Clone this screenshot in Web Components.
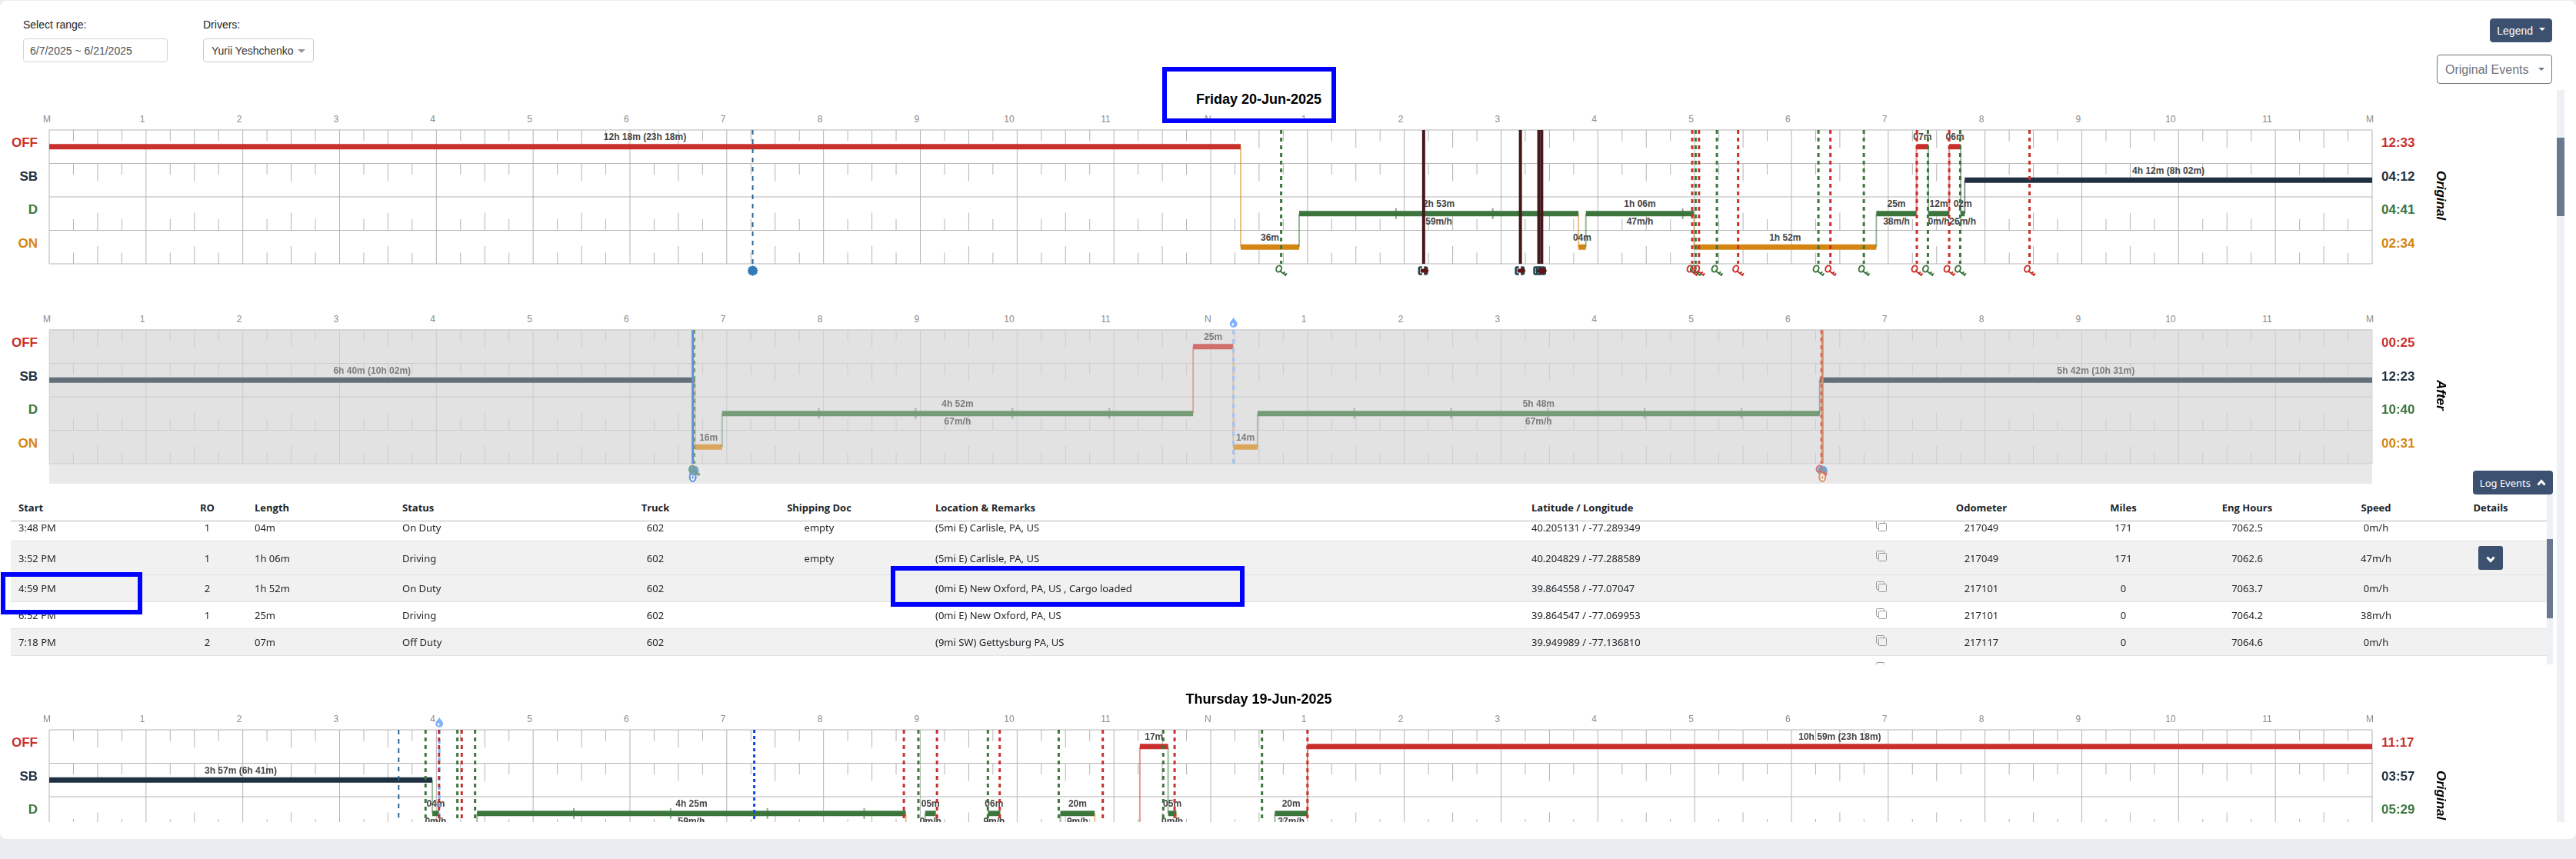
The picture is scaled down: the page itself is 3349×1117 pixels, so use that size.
<!DOCTYPE html>
<html lang="en">
<head>
<meta charset="utf-8">
<meta name="viewport" content="width=device-width, initial-scale=1">
<title>Driver logs</title>
<style>
    body {
        margin: 0;
        background: #ebecf1;
        color: #212529;
        font-family: "Liberation Sans", Arial, sans-serif;
        font-size: 14px;
        --off: #c9302c;
        --sb: #1f3042;
        --d: #3c763d;
        --on: #d58512;
        --primary: #3c5070;
    }
</style>
</head>
<body>
<log-page></log-page>

<script>
const CHARTS = {
    "fri-original": {
        side: "Original",
        totals: ["12:33", "04:12", "04:41", "02:34"],
        segments: [
            ["off", 0, 12.31, "12h 18m (23h 18m)"],
            ["on", 12.31, 12.914, "36m"],
            ["d", 12.914, 15.8, "2h 53m", "59m/h"],
            ["on", 15.8, 15.876, "04m"],
            ["d", 15.876, 16.993, "1h 06m", "47m/h"],
            ["on", 16.993, 18.877, "1h 52m"],
            ["d", 18.877, 19.292, "25m", "38m/h"],
            ["off", 19.292, 19.415, "07m"],
            ["d", 19.415, 19.63, "12m", "0m/h"],
            ["off", 19.63, 19.749, "06m"],
            ["d", 19.749, 19.79, "02m", "26m/h"],
            ["sb", 19.79, 24, "4h 12m (8h 02m)"]
        ],
        markers: [
            ["cert", 7.268], ["keyOn", 12.728],
            ["login", 14.2], ["login", 15.2], ["login", 15.39], ["login", 15.42],
            ["keyOff", 16.975], ["keyOn", 17.01], ["keyOff", 17.045],
            ["keyOn", 17.23], ["keyOff", 17.449], ["keyOn", 18.279], ["keyOff", 18.403],
            ["keyOn", 18.748], ["keyOff", 19.296], ["keyOn", 19.41],
            ["keyOff", 19.63], ["keyOn", 19.744], ["keyOff", 20.46]
        ]
    },
    "fri-after": {
        side: "After",
        shaded: true,
        totals: ["00:25", "12:23", "10:40", "00:31"],
        segments: [
            ["sb", 0, 6.672, "6h 40m (10h 02m)"],
            ["on", 6.672, 6.952, "16m"],
            ["d", 6.952, 11.818, "4h 52m", "67m/h"],
            ["off", 11.818, 12.233, "25m"],
            ["on", 12.233, 12.484, "14m"],
            ["d", 12.484, 18.292, "5h 48m", "67m/h"],
            ["sb", 18.292, 24, "5h 42m (10h 31m)"]
        ],
        markers: [
            ["pinBlue", 6.649], ["cert0", 6.66], ["keyOn", 6.664],
            ["drop", 12.236],
            ["cert0", 18.32], ["pinOrange", 18.32], ["keyOff", 18.31]
        ]
    },
    "thu-original": {
        side: "Original",
        totals: ["11:17", "03:57", "05:29", "03:17"],
        segments: [
            ["sb", 0, 3.958, "3h 57m (6h 41m)"],
            ["d", 3.958, 4.028, "04m", "0m/h"],
            ["on", 4.028, 4.42],
            ["d", 4.42, 8.85, "4h 25m", "59m/h"],
            ["on", 8.85, 9.05],
            ["d", 9.05, 9.16, "05m", "0m/h"],
            ["on", 9.16, 9.698],
            ["d", 9.698, 9.826, "06m", "9m/h"],
            ["on", 9.826, 10.447],
            ["d", 10.447, 10.802, "20m", "9m/h"],
            ["on", 10.802, 11.268],
            ["off", 11.268, 11.56, "17m"],
            ["d", 11.56, 11.646, "05m", "0m/h"],
            ["on", 11.646, 12.663],
            ["d", 12.663, 13, "20m", "37m/h"],
            ["off", 13, 24, "10h 59m (23h 18m)"]
        ],
        markers: [
            ["cert", 3.61], ["keyOn", 3.888], ["drop", 4.03], ["keyOff", 4.027],
            ["keyOn", 4.217], ["keyOff", 4.262], ["keyOn", 4.4], ["blue", 7.284],
            ["keyOff", 8.83], ["keyOn", 8.98], ["keyOff", 9.172],
            ["keyOn", 9.698], ["keyOff", 9.82], ["keyOn", 10.43], ["keyOff", 10.885],
            ["keyOn", 11.51], ["keyOff", 11.627], ["keyOn", 12.53], ["keyOff", 13]
        ]
    }
};

const EVENTS = [
    ["3:48 PM", "1", "04m", "On Duty", "602", "empty", "(5mi E) Carlisle, PA, US", "40.205131 / -77.289349", "217049", "171", "7062.5", "0m/h"],
    ["3:52 PM", "1", "1h 06m", "Driving", "602", "empty", "(5mi E) Carlisle, PA, US", "40.204829 / -77.288589", "217049", "171", "7062.6", "47m/h"],
    ["4:59 PM", "2", "1h 52m", "On Duty", "602", "", "(0mi E) New Oxford, PA, US , Cargo loaded", "39.864558 / -77.07047", "217101", "0", "7063.7", "0m/h"],
    ["6:52 PM", "1", "25m", "Driving", "602", "", "(0mi E) New Oxford, PA, US", "39.864547 / -77.069953", "217101", "0", "7064.2", "38m/h"],
    ["7:18 PM", "2", "07m", "Off Duty", "602", "", "(9mi SW) Gettysburg PA, US", "39.949989 / -77.136810", "217117", "0", "7064.6", "0m/h"],
    ["", "", "", "", "", "", "", "", "", "", "", ""]
];

// [title, relative width, alignment]
const COLUMNS = [
    ["Start", 204, "left"], ["RO", 103, "center"], ["Length", 192, "left"],
    ["Status", 267, "left"], ["Truck", 144, "center"], ["Shipping Doc", 282, "center"],
    ["Location & Remarks", 775, "left"], ["Latitude / Longitude", 428, "left"], ["", 74, "center"],
    ["Odometer", 186, "center"], ["Miles", 183, "center"], ["Eng Hours", 139, "center"],
    ["Speed", 196, "center"], ["Details", 124, "center"]
];

const ROWS = ["off", "sb", "d", "on"];
const TOP = 32;
const ROW_H = 43.5;
const GRID_H = 174;

const KEY = `<g fill="none" stroke="currentColor" stroke-width="2">
    <ellipse cx="-3" cy="-2.500" rx="3.300" ry="4.200" transform="rotate(25 -3 -2.500)"/>
    <path d="M-2 0L6.500 6.500M2.500 3.500L5 1.500M4.500 6L7.500 3.500"/></g>`;
const CERT = `<path fill="#337ab7" d="M0-7L1.600-5.600L3.500-6.100L4.200-4.200L6.100-3.500L5.600-1.600L7 0L5.600 1.600L6.100 3.500L4.200 4.200L3.500 6.100L1.600 5.600L0 7L-1.600 5.600L-3.500 6.100L-4.200 4.200L-6.100 3.500L-5.600 1.600L-7 0L-5.600-1.600L-6.100-3.500L-4.200-4.200L-3.500-6.100L-1.600-5.600Z"/>`;
const LOGIN = `<path fill="none" stroke="#1d4350" stroke-width="2.500" d="M-2-4.500h-2.500a1.500 1.500 0 0 0-1.500 2v5a1.500 1.500 0 0 0 1.500 2h2.500M1-4.500h1.500a2 2 0 0 1 2 2v5a2 2 0 0 1-2 2h-1.500"/>
    <path fill="#5c1616" d="M-4-2.500h4.500v-3L7 0L.5 5.500V2.500h-4.500z"/>`;
const PIN = `<ellipse cy="8" rx="4" ry="6" fill="#fff" stroke="currentColor" stroke-width="2"/>
    <path fill="none" stroke="currentColor" d="M0 6v5M-2 8.500h4"/>`;
const DROP = `<path fill="currentColor" fill-rule="evenodd" d="M0-6.500C1-3.500 5-1 5 2.200A5 4.500 0 0 1-5 2.200C-5-1-1-3.500 0-6.500ZM-1 1a1.200 1.800 0 1 0 .1 0Z"/>`;

// colour, line width, dash, icon, icon above the grid
const MARKERS = {
    keyOn: ["#3c763d", 3, "5 5", KEY],
    keyOff: ["#c9302c", 3, "5 5", KEY],
    cert: ["#2a6496", 2, "6 6", CERT],
    cert0: ["#337ab7", 0, "", CERT],
    login: ["#44191c", 4, "", LOGIN],
    pinBlue: ["#1565d8", 3, "", PIN],
    pinOrange: ["#d5651a", 3, "", PIN],
    drop: ["#82b1ff", 3, "6 6", DROP, true],
    blue: ["#0d4be8", 3, "4 4", ""]
};

const pct = h => (h / 24 * 100).toFixed(3) + "%";

class DutyChart extends HTMLElement {
    constructor() {
        super()
        this.root = this.attachShadow({ mode: "open" });
    }
    connectedCallback() {
        this.data = CHARTS[this.getAttribute("name")];
        this.root.innerHTML = `
        <style>
            :host {
                display: grid;
                grid-template-columns: 50px 1fr 175px;
                height: 232px;
            }
            .statuses, .totals {
                display: flex;
                flex-direction: column;
                height: 174px;
                padding-top: 32px;
                font-size: 17px;
                font-weight: bold;
                line-height: 34px;
            }
            .statuses { text-align: right; padding-right: 15px; }
            .totals { width: 44px; }
            .statuses span, .totals span { flex: 1; }
            .off { color: var(--off); }
            .sb { color: var(--sb); }
            .d { color: var(--d); }
            .on { color: var(--on); }
            .right { display: flex; gap: 25px; padding-left: 12px; }
            .side {
                writing-mode: vertical-rl;
                height: 170px;
                padding-top: 32px;
                color: #000;
                font-size: 17px;
                font-weight: bold;
                font-style: italic;
                line-height: 17px;
                text-align: center;
            }
            svg { display: block; width: 100%; height: 232px; overflow: visible; }
            .hours { fill: #8c8c8c; font-size: 12px; }
            .captions { fill: #444; font-size: 12px; font-weight: bold; text-anchor: middle; }
        </style>
        <div class="statuses">${ROWS.map(r => `<span class="${r}">${r.toUpperCase()}</span>`).join("")}</div>
        <svg>
            ${this.hours()}
            ${this.data.shaded ? `<rect y="31" width="100%" height="201" fill="#e9e9e9"/><rect y="31" width="100%" height="175" fill="#e2e2e2"/>` : ""}
            <g ${this.data.shaded ? 'opacity="0.65"' : ""}>
                <g stroke="#b4b4b4" ${this.data.shaded ? 'opacity="0.7"' : ""}>${this.grid()}</g>
                ${this.segments()}
                ${this.lines()}
                ${this.icons(false)}
            </g>
            ${this.icons(true)}
        </svg>
        <div class="right">
            <div class="totals">${this.data.totals.map((t, i) => `<span class="${ROWS[i]}">${t}</span>`).join("")}</div>
            <div class="side">${this.data.side}</div>
        </div>`;
    }

    hours() {
        let out = "";
        for (let h = 0; h <= 24; h++) {
            let text = h % 24 === 0 ? "M" : h === 12 ? "N" : String(h % 12);
            out += `<text x="${pct(h)}" dx="${text.length > 1 ? -17 : -8}" y="22">${text}</text>`;
        }
        return `<g class="hours">${out}</g>`;
    }

    grid() {
        let out = "";
        for (let r = 0; r <= 4; r++) {
            const y = TOP + r * ROW_H;
            out += `<line x1="0" x2="100%" y1="${y}" y2="${y}"/>`;
        }
        for (let q = 0; q <= 96; q++) {
            const x = pct(q / 4);
            if (q % 4 === 0) {
                out += `<line x1="${x}" x2="${x}" y1="${TOP}" y2="${TOP + GRID_H}"/>`;
                continue;
            }
            const len = q % 2 ? 14.5 : 23;
            // OFF and SB ticks hang from the top of the row, D and ON ticks stand on its bottom
            for (let r = 0; r < 4; r++) {
                const y = r < 2 ? TOP + r * ROW_H : TOP + (r + 1) * ROW_H - len;
                out += `<line x1="${x}" x2="${x}" y1="${y}" y2="${y + len}"/>`;
            }
        }
        return out;
    }

    segments() {
        let bars = "", captions = "", prevY = null;
        this.data.segments.forEach(([status, from, to, caption, speed]) => {
            const top = TOP + ROWS.indexOf(status) * ROW_H;
            const y = top + ROW_H / 2;
            const color = `var(--${status})`;
            if (prevY !== null) {
                bars += `<line x1="${pct(from)}" x2="${pct(from)}" y1="${prevY}" y2="${y}" stroke="${color}" stroke-width="2" opacity="0.5"/>`;
            }
            bars += `<line x1="${pct(from)}" x2="${pct(to)}" y1="${y}" y2="${y}" stroke="${color}" stroke-width="7"/>`;
            if (status === "d") {
                for (let h = from + 1; h < to; h++) {
                    bars += `<line x1="${pct(h)}" x2="${pct(h)}" y1="${y - 7}" y2="${y + 7}" stroke="${color}" stroke-width="2" opacity="0.6"/>`;
                }
            }
            const mid = pct((from + to) / 2);
            if (caption) captions += `<text x="${mid}" y="${top + 13}">${caption}</text>`;
            if (speed) captions += `<text x="${mid}" y="${top + 36}">${speed}</text>`;
            prevY = y;
        });
        return bars + `<g class="captions">${captions}</g>`;
    }

    lines() {
        return this.data.markers.map(([type, h]) => {
            const [color, width, dash] = MARKERS[type];
            const x = pct(h);
            return `<line x1="${x}" x2="${x}" y1="${TOP}" y2="${TOP + GRID_H}" stroke="${color}" stroke-width="${width}" stroke-dasharray="${dash}"/>`;
        }).join("");
    }

    icons(above) {
        return this.data.markers.filter(([type]) => Boolean(MARKERS[type][4]) === above).map(([type, h]) => {
            const [color, , , icon] = MARKERS[type];
            return `<svg x="${pct(h)}" y="${above ? 22 : 215}" style="width:1px;height:1px;color:${color}">${icon}</svg>`;
        }).join("");
    }
}

class ScrollRail extends HTMLElement {
    constructor() {
        super()
        this.root = this.attachShadow({ mode: "open" });
        this.root.innerHTML = `
        <style>
            :host { display: block; overflow: hidden; background: #edf1f5; }
            div { background: #6a7891; margin-top: var(--thumb-top); height: var(--thumb-size); }
        </style>
        <div></div>`;
    }
}

class EventsTable extends HTMLElement {
    constructor() {
        super()
        this.root = this.attachShadow({ mode: "open" });
    }
    connectedCallback() {
        const total = COLUMNS.reduce((sum, c) => sum + c[1], 0);
        this.root.innerHTML = `
        <style>
            :host {
                display: flex;
                flex-direction: column;
                font-family: "Segoe UI", "Noto Sans", "Open Sans", sans-serif;
                font-size: 13px;
            }
            button {
                border: 0;
                border-radius: 4px;
                height: 31px;
                background: var(--primary);
                color: #fff;
                font: inherit;
            }
            .toggle {
                display: flex;
                align-items: center;
                gap: 8px;
                align-self: flex-end;
                padding: 0 9px;
            }
            .pane { display: flex; height: 221px; }
            .rows { flex: 1; overflow: hidden; }
            scroll-rail { width: 8px; --thumb-top: 58px; --thumb-size: 103px; }
            table { width: 100%; table-layout: fixed; border-collapse: separate; border-spacing: 0; }
            th {
                position: sticky;
                top: 0;
                height: 34px;
                background: #fff;
                border-bottom: 1px solid #b8b8b8;
                font-family: "Segoe UI", "Open Sans", sans-serif;
            }
            th, td { padding: 0 10px; white-space: nowrap; }
            th:last-child, td:last-child { padding-right: 32px; }
            td { height: 34px; border-bottom: 1px solid #dee2e6; line-height: 20px; }
            tr.tall td { height: 43px; }
            tr.shade td { background: #f1f1f1; }
            svg { display: inline-block; vertical-align: middle; }
            td button { width: 32px; padding: 0; border-radius: 3px; }
            td .copy { border: 0; background: none; width: 14px; height: 16px; }
            .copy svg { display: block; }
        </style>
        <button class="toggle">Log Events
            <svg width="12" height="9" viewBox="0 0 12 9"><path d="M1.500 7.500L6 2.500L10.500 7.500" fill="none" stroke="#fff" stroke-width="3"/></svg>
        </button>
        <div class="pane">
            <div class="rows">
                <table>
                    <colgroup>${COLUMNS.map(c => `<col style="width:${c[1] / total * 100}%">`).join("")}</colgroup>
                    <thead><tr>${COLUMNS.map(c => `<th style="text-align:${c[2]}">${c[0].replace("&", "&amp;")}</th>`).join("")}</tr></thead>
                    <tbody>${EVENTS.map((e, i) => this.createRow(e, i)).join("")}</tbody>
                </table>
            </div>
            <scroll-rail></scroll-rail>
        </div>`;
        this.root.querySelector(".rows").scrollTop = 9;
    }

    createRow(event, i) {
        const copy = `<button class="copy" aria-label="Copy coordinates"><svg width="14" height="14" viewBox="0 0 14 14" fill="none" stroke="#999">
            <rect x="3.500" y="3.500" width="10" height="10" rx="1"/><path d="M3.500 10.500H1.500a1 1 0 0 1-1-1v-8a1 1 0 0 1 1-1h8a1 1 0 0 1 1 1v2"/></svg></button>`;
        const details = i !== 1 ? "" : `<button aria-label="Show details">
            <svg width="12" height="9" viewBox="0 0 12 9"><path d="M1.500 1.500L6 6.500L10.500 1.500" fill="none" stroke="#fff" stroke-width="3"/></svg></button>`;
        const cells = [...event.slice(0, 8), copy, ...event.slice(8), details];
        const cls = (i === 1 ? "tall " : "") + ([1, 2, 4].includes(i) ? "shade" : "");
        return `<tr class="${cls}">${cells.map((c, n) => `<td style="text-align:${COLUMNS[n][2]}">${c}</td>`).join("")}</tr>`;
    }
}

class FilterBar extends HTMLElement {
    constructor() {
        super()
        this.root = this.attachShadow({ mode: "open" });
        this.root.innerHTML = `
        <style>
            :host {
                display: flex;
                justify-content: space-between;
                padding: 23px 31px 8px 30px;
            }
            .fields { display: flex; gap: 46px; }
            .field { display: flex; flex-direction: column; gap: 10px; }
            .actions { display: flex; flex-direction: column; align-items: flex-end; gap: 16px; }
            label { line-height: 16px; }
            input, select, button {
                box-sizing: border-box;
                height: 31px;
                border: 1px solid #ccc;
                border-radius: 4px;
                background: #fff;
                color: #333;
                font: inherit;
            }
            input { width: 188px; padding: 0 8px; color: #495057; border-color: #ced4da; }
            select { appearance: none; width: 100%; padding: 0 25px 0 10px; }
            .pick { position: relative; display: block; }
            .pick::after {
                content: "";
                position: absolute;
                right: 11px;
                top: 14px;
                border: 5px solid transparent;
                border-top-color: #999;
                border-bottom: 0;
            }
            .drivers { width: 144px; }
            .events { width: 150px; }
            .events select { height: 38px; font-size: 16px; color: #6c757d; border-color: #6c757d; }
            .events::after { border-width: 4px; border-bottom: 0; right: 10px; top: 17px; border-top-color: #6c757d; }
            button {
                display: flex;
                align-items: center;
                gap: 8px;
                padding: 0 8px;
                background: var(--primary);
                border-color: var(--primary);
                color: #fff;
            }
            button::after { content: ""; border: 4px solid transparent; border-top-color: #fff; border-bottom: 0; margin-bottom: 3px; }
        </style>
        <div class="fields">
            <div class="field"><label for="range">Select range:</label><input id="range" type="text" value="6/7/2025 ~ 6/21/2025"></div>
            <div class="field"><label for="driver">Drivers:</label>
                <span class="pick drivers"><select id="driver"><option>Yurii Yeshchenko</option></select></span></div>
        </div>
        <div class="actions">
            <button>Legend</button>
            <span class="pick events"><select aria-label="Events"><option>Original Events</option></select></span>
        </div>`;
    }
}

class CallOut extends HTMLElement {
    constructor() {
        super()
        this.root = this.attachShadow({ mode: "open" });
        this.root.innerHTML = `
        <style>
            :host {
                position: absolute;
                box-sizing: border-box;
                border: 6px solid #00f;
                pointer-events: none;
            }
        </style>`;
    }
}

class DayHeading extends HTMLElement {
    constructor() {
        super()
        this.root = this.attachShadow({ mode: "open" });
        this.root.innerHTML = `
        <style>
            :host { display: block; height: 20px; }
            h2 { margin: 0; color: #000; font-size: 18px; line-height: 24px; text-align: center; }
        </style>
        <h2><slot></slot></h2>`;
    }
}

class LogPage extends HTMLElement {
    constructor() {
        super()
        this.root = this.attachShadow({ mode: "open" });
        this.root.innerHTML = `
        <style>
            :host { display: block; padding: 1px 0 26px; box-sizing: border-box; height: 100vh; }
            main {
                position: relative;
                box-sizing: border-box;
                display: flex;
                flex-direction: column;
                height: 100%;
                padding-bottom: 22px;
                background: #fff;
                border-radius: 8px;
            }
            .body { flex: 1; min-height: 0; display: flex; gap: 5px; padding: 0 15px 0 14px; }
            .days { flex: 1; overflow: hidden; }
            scroll-rail { width: 10px; --thumb-top: 62px; --thumb-size: 102px; }
            day-heading, duty-chart { margin-right: 60px; }
            duty-chart + duty-chart { margin-top: 28px; }
            events-table { position: relative; margin: -17px 0 33px; }
            .title-box { left: 1511px; top: 86px; width: 226px; height: 73px; }
            .time-box { left: 1px; top: 743px; width: 184px; height: 55px; }
            .place-box { left: 1158px; top: 735px; width: 460px; height: 53px; }
        </style>
        <main>
            <filter-bar></filter-bar>
            <div class="body">
                <div class="days">
                    <day-heading>Friday 20-Jun-2025</day-heading>
                    <duty-chart name="fri-original"></duty-chart>
                    <duty-chart name="fri-after"></duty-chart>
                    <events-table></events-table>
                    <day-heading>Thursday 19-Jun-2025</day-heading>
                    <duty-chart name="thu-original"></duty-chart>
                </div>
                <scroll-rail></scroll-rail>
            </div>
            <call-out class="title-box"></call-out>
            <call-out class="time-box"></call-out>
            <call-out class="place-box"></call-out>
        </main>`;
    }
}

customElements.define("scroll-rail", ScrollRail);
customElements.define("call-out", CallOut);
customElements.define("day-heading", DayHeading);
customElements.define("filter-bar", FilterBar);
customElements.define("duty-chart", DutyChart);
customElements.define("events-table", EventsTable);
customElements.define("log-page", LogPage);
</script>
</body>
</html>
